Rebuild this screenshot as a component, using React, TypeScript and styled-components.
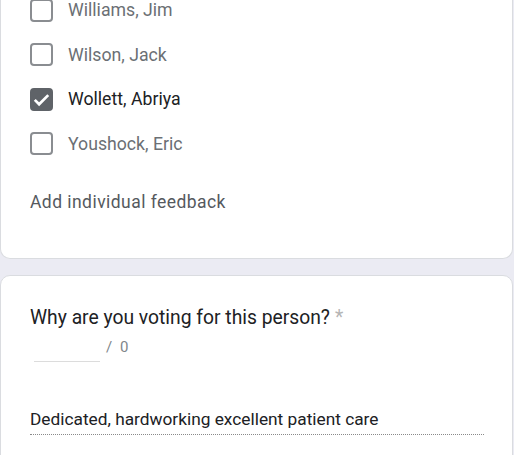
import React from "react";
import styled, { createGlobalStyle } from "styled-components";

const GlobalStyle = createGlobalStyle`
  html, body {
    margin: 0;
    padding: 0;
    background: #ebebf3;
    overflow: hidden;
  }
  body {
    font-family: Roboto, "Liberation Sans", Arial, sans-serif;
  }
`;

const Page = styled.div`
  display: flex;
  flex-direction: column;
  gap: 16px;
  margin-top: -12px;
  padding-right: 1px;
`;

// a question block on the form
const Card = styled.section<{ $cutTop?: boolean }>`
  background: #ffffff;
  border: 1px solid #dadce0;
  border-radius: 10px;
  ${(p) => p.$cutTop && "border-top: none; border-top-left-radius: 0; border-top-right-radius: 0;"}
  padding: 0 28px 44px 29px;
`;

const OptionList = styled.div`
  display: flex;
  flex-direction: column;
`;

const Option = styled.label`
  display: flex;
  align-items: center;
  gap: 15px;
  height: 44.5px;
`;

const Box = styled.span<{ $checked?: boolean }>`
  width: 23px;
  height: 23px;
  box-sizing: border-box;
  border-radius: 4px;
  border: 2px solid ${(p) => (p.$checked ? "#5f6368" : "#8a8d91")};
  background: ${(p) => (p.$checked ? "#5f6368" : "#fff")};
  display: flex;
  align-items: center;
  justify-content: center;
`;

const OptionText = styled.span<{ $checked?: boolean }>`
  font-size: 17.7px;
  color: ${(p) => (p.$checked ? "#202124" : "#6b6f74")};
`;

const FeedbackLink = styled.div`
  margin-top: 24px;
  font-size: 17.5px;
  line-height: 24px;
  font-weight: 400;
  letter-spacing: 0.45px;
  color: #55595e;
`;

const Question = styled.div`
  padding-top: 29px;
  font-size: 19.3px;
  line-height: 26px;
  color: #202124;
`;

const Required = styled.span`
  color: #b5b5b5;
  margin-left: 5px;
`;

const CounterRow = styled.div`
  display: flex;
  align-items: flex-start;
  gap: 6px;
  margin-top: 7px;
  padding-left: 4px;
`;

const ShortInput = styled.div`
  width: 66px;
  height: 23px;
  border-bottom: 1px solid #dcdcdc;
`;

const Counter = styled.span`
  font-size: 15px;
  line-height: 16px;
  margin-top: 1px;
  color: #80868b;
  word-spacing: 4px;
`;

const Answer = styled.div`
  margin-top: 45px;
  font-size: 17.3px;
  line-height: 24px;
  padding-bottom: 3px;
  color: #202124;
  border-bottom: 1px dotted #8a8a8a;
`;

const people = [
  { name: "Williams, Jim", checked: false },
  { name: "Wilson, Jack", checked: false },
  { name: "Wollett, Abriya", checked: true },
  { name: "Youshock, Eric", checked: false },
];

const Check = () => (
  <svg width="19" height="19" viewBox="0 0 24 24">
    <path d="M3.5 12.5l5.5 5.5L20.5 6.5" fill="none" stroke="#fff" strokeWidth="3.4" />
  </svg>
);

export default function App() {
  return (
    <>
      <GlobalStyle />
      <Page>
        <Card $cutTop>
          <OptionList>
            {people.map((p) => (
              <Option key={p.name}>
                <Box $checked={p.checked}>{p.checked && <Check />}</Box>
                <OptionText $checked={p.checked}>{p.name}</OptionText>
              </Option>
            ))}
          </OptionList>
          <FeedbackLink>Add individual feedback</FeedbackLink>
        </Card>
        <Card>
          <Question>
            Why are you voting for this person?<Required>*</Required>
          </Question>
          <CounterRow>
            <ShortInput />
            <Counter>/ 0</Counter>
          </CounterRow>
          <Answer>Dedicated, hardworking excellent patient care</Answer>
        </Card>
      </Page>
    </>
  );
}
